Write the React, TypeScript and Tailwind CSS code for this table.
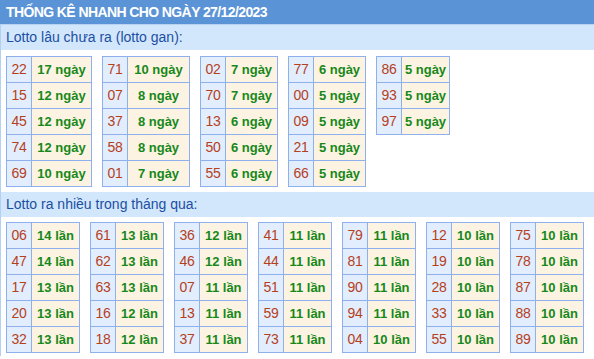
import React from 'react';

type Row = [string, string];

const ganTables: { w: number; rows: Row[] }[] = [
  { w: 59, rows: [['22', '17 ngày'], ['15', '12 ngày'], ['45', '12 ngày'], ['74', '12 ngày'], ['69', '10 ngày']] },
  { w: 61, rows: [['71', '10 ngày'], ['07', '8 ngày'], ['37', '8 ngày'], ['58', '8 ngày'], ['01', '7 ngày']] },
  { w: 51, rows: [['02', '7 ngày'], ['70', '7 ngày'], ['13', '6 ngày'], ['50', '6 ngày'], ['55', '6 ngày']] },
  { w: 51, rows: [['77', '6 ngày'], ['00', '5 ngày'], ['09', '5 ngày'], ['21', '5 ngày'], ['66', '5 ngày']] },
  { w: 47, rows: [['86', '5 ngày'], ['93', '5 ngày'], ['97', '5 ngày']] },
];

const hotTables: Row[][] = [
  [['06', '14 lần'], ['47', '14 lần'], ['17', '13 lần'], ['20', '13 lần'], ['32', '13 lần']],
  [['61', '13 lần'], ['62', '13 lần'], ['63', '13 lần'], ['16', '12 lần'], ['18', '12 lần']],
  [['36', '12 lần'], ['46', '12 lần'], ['07', '11 lần'], ['13', '11 lần'], ['37', '11 lần']],
  [['41', '11 lần'], ['44', '11 lần'], ['51', '11 lần'], ['59', '11 lần'], ['73', '11 lần']],
  [['79', '11 lần'], ['81', '11 lần'], ['90', '11 lần'], ['94', '11 lần'], ['04', '10 lần']],
  [['12', '10 lần'], ['19', '10 lần'], ['28', '10 lần'], ['33', '10 lần'], ['55', '10 lần']],
  [['75', '10 lần'], ['78', '10 lần'], ['87', '10 lần'], ['88', '10 lần'], ['89', '10 lần']],
];

const StatTable = ({ rows, valueWidth }: { rows: Row[]; valueWidth: number }) => (
  <div className="border border-[#8eb1ee] self-start">
    {rows.map(([num, val], i) => (
      <div key={i} className={`flex h-[25px] box-content ${i > 0 ? 'border-t border-[#8eb1ee]' : ''}`}>
        <div className="w-[24px] box-content bg-[#e2eefd] border-r border-[#8eb1ee] flex items-center justify-center text-[14px] tracking-[-0.4px] text-[#b5401c]">
          {num}
        </div>
        <div className="bg-[#fdf3e2] flex items-center justify-center text-[13px] font-bold text-[#17881a]" style={{ width: valueWidth }}>
          {val}
        </div>
      </div>
    ))}
  </div>
);

const SectionTitle = ({ children }: { children: React.ReactNode }) => (
  <div className="h-[25px] bg-[#d3e7fc] pl-[5px] flex items-center text-[14px] text-[#1b4fa3]">{children}</div>
);

export default function App() {
  return (
    <div className="w-[594px] h-[359px] bg-white overflow-hidden" style={{ fontFamily: '"Liberation Sans", Arial, sans-serif' }}>
      <div className="h-[25px] bg-[#5b94d6] border-b border-[#b9d3f2] pl-[6px] flex items-center text-[14px] tracking-[-0.6px] font-bold text-white">
        THỐNG KÊ NHANH CHO NGÀY 27/12/2023
      </div>
      <div className="border-l border-[#b3cff1] pb-[3px]">
        <SectionTitle>Lotto lâu chưa ra (lotto gan):</SectionTitle>
        <div className="flex gap-[10px] pl-[5px] pt-[6px] pb-[5px]">
          {ganTables.map((t, i) => (
            <StatTable key={i} rows={t.rows} valueWidth={t.w} />
          ))}
        </div>
        <SectionTitle>Lotto ra nhiều trong tháng qua:</SectionTitle>
        <div className="flex gap-[10px] pl-[5px] pt-[5px]">
          {hotTables.map((rows, i) => (
            <StatTable key={i} rows={rows} valueWidth={47} />
          ))}
        </div>
      </div>
    </div>
  );
}
